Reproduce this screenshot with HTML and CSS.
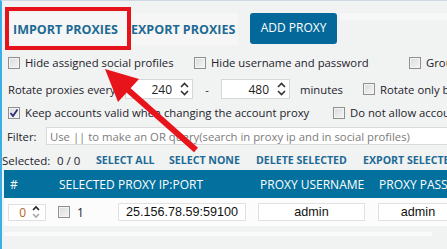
FILE: index.html
```html
<!DOCTYPE html>
<html>
<head>
<meta charset="utf-8">
<link rel="stylesheet" href="styles.css">
</head>
<body>
<div class="page">
  <div class="tabs">
    <div class="tab-group">
      <div class="tab tab-import">IMPORT PROXIES</div>
      <div class="tab tab-export">EXPORT PROXIES</div>
    </div>
    <button class="btn-add">ADD PROXY</button>
    <div class="tabs-fill"></div>
  </div>

  <div class="opt-row r1">
    <label class="chk-item w186"><span class="cb"></span><span>Hide assigned social profiles</span></label>
    <label class="chk-item w215"><span class="cb"></span><span>Hide username and password</span></label>
    <label class="chk-item"><span class="cb"></span><span>Group proxies</span></label>
  </div>

  <div class="opt-row r2">
    <span class="lbl-rotate">Rotate proxies every</span>
    <div class="spin spin1"><span class="spin-val">240</span><svg class="spin-arr" viewBox="0 0 9 14" width="9" height="14"><path d="M1 5 L4.5 1.5 L8 5" /><path d="M1 9 L4.5 12.5 L8 9" /></svg></div>
    <span class="dash">-</span>
    <div class="spin spin2"><span class="spin-val">480</span><svg class="spin-arr" viewBox="0 0 9 14" width="9" height="14"><path d="M1 5 L4.5 1.5 L8 5" /><path d="M1 9 L4.5 12.5 L8 9" /></svg></div>
    <span class="lbl-min">minutes</span>
    <label class="chk-item"><span class="cb"></span><span>Rotate only blocked proxies</span></label>
  </div>

  <div class="opt-row r3">
    <label class="chk-item w325"><span class="cb checked"><svg viewBox="0 0 10 10" width="10" height="10"><path d="M1.5 5 L4 8 L8.5 1.5" /></svg></span><span>Keep accounts valid when changing the account proxy</span></label>
    <label class="chk-item"><span class="cb"></span><span>Do not allow accounts to share proxies</span></label>
  </div>

  <div class="filter-row">
    <span class="lbl-filter">Filter:</span>
    <input class="filter-input" type="text" placeholder="Use || to make an OR query(search in proxy ip and in social profiles)">
  </div>

  <div class="sel-row">
    <span class="sel-lbl">Selected:</span>
    <span class="sel-count">0 / 0</span>
    <a class="lnk w73">SELECT ALL</a>
    <a class="lnk w87">SELECT NONE</a>
    <a class="lnk w107">DELETE SELECTED</a>
    <a class="lnk">EXPORT SELECTED</a>
  </div>

  <div class="table">
    <div class="thead">
      <div class="th">#</div>
      <div class="th">SELECTED</div>
      <div class="th">PROXY IP:PORT</div>
      <div class="th">PROXY USERNAME</div>
      <div class="th">PROXY PASSWORD</div>
    </div>
    <div class="trow">
      <div class="td td1">
        <div class="rspin"><span class="rspin-val">0</span><svg class="rspin-arr" viewBox="0 0 8 14" width="8" height="14"><path class="up" d="M1 5 L4 2 L7 5" /><path class="dn" d="M1 9 L4 12 L7 9" /></svg></div>
      </div>
      <div class="td td2"><span class="cb"></span><span class="num">1</span></div>
      <div class="td td3"><div class="cell-in ip">25.156.78.59:59100</div></div>
      <div class="td td4"><div class="cell-in user">admin</div></div>
      <div class="td td5"><div class="cell-in pass">admin</div></div>
    </div>
    <div class="tfoot"></div>
  </div>
</div>

<div class="highlight-box"></div>
<svg class="arrow" width="447" height="249" viewBox="0 0 447 249">
  <line x1="127" y1="89" x2="196" y2="150" />
  <polygon points="105,69 139,79 118,102" />
</svg>
</body>
</html>
```

FILE: styles.css
```css
* { box-sizing: border-box; margin: 0; padding: 0; }
html, body { width: 447px; height: 249px; overflow: hidden; }
body {
  background: #f1f2f2;
  font-family: "Open Sans", "Noto Sans", sans-serif;
  font-size: 11.3px;
  color: #23232b;
}
.page {
  height: 249px;
  border-left: 2px solid #3aaee6;
  border-top: 1px solid #cfd6e4;
  white-space: nowrap;
  overflow: hidden;
}

/* tabs */
.tabs {
  display: flex;
  align-items: flex-start;
  height: 49px;
  padding-top: 12px;
  padding-left: 6px;
}
.tab-group {
  display: flex;
  height: 32px;
  background: #f6f6f6;
}
.tab {
  font-weight: 700;
  font-size: 12.5px;
  color: #1d6a94;
  line-height: 32px;
  padding-top: 1px;
}
.tab-import { width: 123px; padding-left: 5px; }
.tab-export { width: 107px; }
.btn-add {
  margin-left: 12px;
  width: 87px;
  height: 31px;
  border: none;
  border-radius: 3px;
  background: #04699a;
  color: #fff;
  font-family: "Open Sans", "Noto Sans", sans-serif;
  font-size: 12px;
  padding-bottom: 3px;
}
.tabs-fill {
  flex: 1;
  height: 7px;
  margin-left: 3px;
  background: #f7f7f7;
}

/* option rows */
.opt-row {
  display: flex;
  align-items: center;
  padding-left: 6px;
}
.r1 { height: 25px; }
.r2 { height: 28px; }
.r3 { height: 19px; }
.chk-item {
  display: flex;
  align-items: center;
  gap: 5px;
  flex: none;
}
.w186 { width: 186px; }
.w215 { width: 215px; }
.w325 { width: 325px; }

.cb {
  width: 12px;
  height: 12px;
  flex: none;
  border: 1px solid #8e8f8f;
  background: linear-gradient(135deg, #d9dadb, #f5f5f5);
  box-shadow: inset 0 0 0 1px #f4f4f4;
  display: flex;
  align-items: center;
  justify-content: center;
}
.cb svg path {
  fill: none;
  stroke: #2b2d78;
  stroke-width: 1.8;
}

.lbl-rotate { width: 117px; flex: none; }
.spin {
  width: 68px;
  height: 20px;
  flex: none;
  background: #fff;
  border: 1px solid #d6d6d6;
  display: flex;
  align-items: center;
  justify-content: flex-end;
  font-size: 12px;
  color: #222;
}
.spin2 { width: 69px; }
.spin-val { margin-right: 8px; }
.spin-arr { margin-right: 3px; }
.spin-arr path { fill: none; stroke: #333; stroke-width: 1.6; }
.dash { width: 28px; flex: none; text-align: center; }
.lbl-min { margin-left: 10px; width: 63px; flex: none; }

/* filter */
.filter-row {
  display: flex;
  align-items: center;
  height: 28px;
  padding-left: 5px;
}
.lbl-filter { width: 39px; flex: none; }
.filter-input {
  flex: none;
  width: 420px;
  height: 18px;
  border: 1px solid #dadada;
  background: #fff;
  padding-left: 3px;
  font-family: "Open Sans", "Noto Sans", sans-serif;
  font-size: 11.3px;
  outline: none;
}
.filter-input::placeholder { color: #7b7b7b; }

/* selected row */
.sel-row {
  display: flex;
  align-items: center;
  height: 20px;
  font-size: 11.5px;
}
.sel-lbl { width: 55px; flex: none; }
.sel-count { width: 39px; flex: none; }
.lnk {
  font-weight: 700;
  font-size: 10.6px;
  color: #1d6a94;
  flex: none;
}
.w73 { width: 73px; }
.w87 { width: 87px; }
.w107 { width: 107px; }

/* table */
.table { margin-left: 2px; }
.thead, .trow {
  display: grid;
  grid-template-columns: 49px 59px 142px 119px 1fr;
}
.thead {
  height: 28px;
  background: #03709e;
  color: #fff;
  font-size: 12px;
  align-items: center;
}
.th { padding-left: 6px; padding-top: 1px; }
.trow {
  height: 28px;
  background: #fcfcfc;
  align-items: center;
}
.td { display: flex; align-items: center; }
.td1 { padding-left: 4px; }
.td2 { padding-left: 5px; gap: 7px; font-size: 12px; }
.td3 { padding-left: 6px; }
.td4 { padding-left: 4px; }
.td5 { padding-left: 5px; }
.rspin {
  width: 38px;
  height: 17px;
  background: #fff;
  border: 1px solid #e0e0e0;
  display: flex;
  align-items: center;
  justify-content: flex-end;
}
.rspin-val { font-size: 12px; color: #b8621b; margin-right: 6px; }
.rspin-arr { margin-right: 5px; }
.rspin-arr path { fill: none; stroke-width: 1.6; }
.rspin-arr .up { stroke: #222; }
.rspin-arr .dn { stroke: #a9a9a9; }
.cell-in {
  height: 18px;
  background: #fff;
  border: 1px solid #e1e1e1;
  font-family: "Liberation Sans", Arial, sans-serif;
  font-size: 12.6px;
  color: #111;
  text-align: center;
  line-height: 16px;
}
.ip { width: 128px; }
.user { width: 107px; }
.pass { width: 80px; }
.tfoot {
  margin-top: 6px;
  width: 428px;
  height: 4px;
  background: #fafafa;
}

/* annotations */
.highlight-box {
  position: absolute;
  left: 5px;
  top: 7px;
  width: 126px;
  height: 43px;
  border: 4px solid #e5141c;
}
.arrow {
  position: absolute;
  left: 0;
  top: 0;
}
.arrow line { stroke: #e8141c; stroke-width: 6; }
.arrow polygon { fill: #e8141c; }
```
